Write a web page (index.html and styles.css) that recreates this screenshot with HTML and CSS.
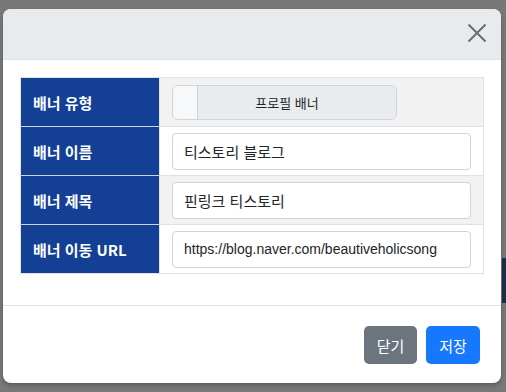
FILE: index.html
```html
<!DOCTYPE html>
<html lang="ko">
<head>
<meta charset="utf-8">
<link rel="stylesheet" href="styles.css">
</head>
<body>
<div class="bg-strip"></div>
<div class="modal">
  <div class="modal-header">
    <button class="close" aria-label="닫기">
      <svg width="20" height="20" viewBox="0 0 20 20"><path d="M1.5 1.5 L18.5 18.5 M18.5 1.5 L1.5 18.5" stroke="#6d6d6d" stroke-width="2" fill="none"/></svg>
    </button>
  </div>
  <div class="modal-body">
    <table class="form-table">
      <tr class="odd">
        <th>배너 유형</th>
        <td>
          <div class="btn-group">
            <span class="bg-prepend"></span>
            <span class="bg-btn">프로필 배너</span>
          </div>
        </td>
      </tr>
      <tr>
        <th>배너 이름</th>
        <td><div class="input">티스토리 블로그</div></td>
      </tr>
      <tr class="odd">
        <th>배너 제목</th>
        <td><div class="input">핀링크 티스토리</div></td>
      </tr>
      <tr>
        <th>배너 이동 URL</th>
        <td><div class="input latin">https://blog.naver.com/beautiveholicsong</div></td>
      </tr>
    </table>
  </div>
  <div class="modal-footer">
    <button class="btn btn-secondary">닫기</button>
    <button class="btn btn-primary">저장</button>
  </div>
</div>
</body>
</html>
```

FILE: styles.css
```css
* { box-sizing: border-box; }
html, body {
  margin: 0;
  padding: 0;
  background: #787878;
  width: 506px;
  height: 392px;
  overflow: hidden;
  font-family: "Noto Sans CJK KR", "Liberation Sans", sans-serif;
}
body { position: relative; padding-top: 9px; padding-left: 3px; }
.bg-strip {
  position: absolute;
  left: 502px;
  top: 258px;
  width: 4px;
  height: 45px;
  background: #1d2d4d;
}
.modal {
  position: relative;
  width: 498px;
  height: 374px;
  background: #fff;
  border-radius: 8px;
  overflow: hidden;
  display: flex;
  flex-direction: column;
  box-shadow: 0 2px 4px rgba(0,0,0,0.25);
}
.modal-header {
  height: 51px;
  background: #e8ebee;
  border-bottom: 1px solid #dfe2e5;
  display: flex;
  justify-content: flex-end;
  align-items: center;
  padding-right: 14px;
}
.close {
  border: 0;
  background: transparent;
  padding: 0;
  width: 20px;
  height: 20px;
  display: flex;
  margin-top: -2px;
}
.modal-body {
  padding: 17px 17px 0 17px;
  height: 246px;
  border-bottom: 1px solid #dfe2e5;
}
.form-table {
  width: 464px;
  border-collapse: collapse;
  border: 1px solid #dee2e6;
}
.form-table th {
  width: 139px;
  height: 49px;
  background: #133f95;
  color: #fff;
  text-align: left;
  font-weight: 700;
  font-size: 15px;
  padding: 0 0 0 12px;
  border-bottom: 1px solid #c9d3e6;
  border-right: 1px solid #dee2e6;
}
.form-table tr:last-child th { border-bottom: 0; }
.form-table td {
  padding: 0 12px;
  border-bottom: 1px solid #dee2e6;
  background: #fff;
}
.form-table tr.odd td { background: #f2f2f2; }
.input {
  height: 37px;
  border: 1px solid #ced4da;
  border-radius: 4px;
  background: #fff;
  font-size: 15px;
  color: #212529;
  display: flex;
  align-items: center;
  padding-left: 11px;
}
.input.latin { font-family: "Liberation Sans", "Noto Sans CJK KR", sans-serif; font-size: 14px; }
.btn-group {
  width: 225px;
  height: 35px;
  display: flex;
  border: 1px solid #ced4da;
  border-radius: 6px;
  overflow: hidden;
}
.bg-prepend {
  width: 25px;
  background: #f7f8fa;
  border-right: 1px solid #ced4da;
}
.bg-btn {
  flex: 1;
  background: #e9ecef;
  font-size: 13px;
  color: #212529;
  display: flex;
  align-items: center;
  justify-content: center;
  padding-right: 20px;
}
.modal-footer {
  flex: 1;
  display: flex;
  justify-content: flex-end;
  align-items: flex-start;
  gap: 9px;
  padding: 20px 21px 0 0;
}
.btn {
  height: 38px;
  border: 0;
  border-radius: 5px;
  color: #fff;
  font-family: "Noto Sans CJK KR", sans-serif;
  font-size: 15px;
  padding: 0 12px;
}
.btn-secondary { background: #6c757d; width: 53px; }
.btn-primary { background: #1679fd; width: 54px; }
```
